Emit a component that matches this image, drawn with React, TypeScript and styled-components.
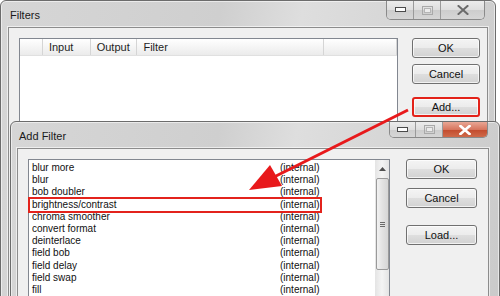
import styled, { createGlobalStyle } from "styled-components";

const GlobalStyle = createGlobalStyle`
  html, body {
    margin: 0;
    padding: 0;
    background: #ffffff;
  }
  body {
    width: 500px;
    height: 296px;
    overflow: hidden;
    font-family: "Liberation Sans", Arial, sans-serif;
  }
`;

const filterNames = [
  "blur more",
  "blur",
  "bob doubler",
  "brightness/contrast",
  "chroma smoother",
  "convert format",
  "deinterlace",
  "field bob",
  "field delay",
  "field swap",
  "fill",
];

const MinIcon = () => (
  <svg width="11" height="6" viewBox="0 0 11 6">
    <rect x="0.5" y="0.5" width="10" height="4" fill="#fdfdfd" stroke="#4a4a4a" />
  </svg>
);

const MaxIcon = () => (
  <svg width="11" height="9" viewBox="0 0 11 9">
    <rect x="0.5" y="0.5" width="10" height="8" fill="none" stroke="#a9a9a9" />
    <rect x="2.5" y="2.5" width="6" height="4" fill="#ececec" stroke="#b5b5b5" />
  </svg>
);

const CloseIcon = ({ active }: { active?: boolean }) => (
  <svg width="12" height="10" viewBox="0 0 12 10">
    <path
      d="M1.5 1 L10.5 9 M10.5 1 L1.5 9"
      stroke={active ? "#ffffff" : "#6a6a6a"}
      strokeWidth={active ? 2.6 : 2}
      strokeLinecap="square"
    />
  </svg>
);

const ArrowOverlay = () => (
  <Overlay width="500" height="296" viewBox="0 0 500 296">
    <line x1="408" y1="110" x2="272" y2="178" stroke="#e8191b" strokeWidth="3" />
    <polygon points="249,190 270,165 282,186" fill="#e8191b" />
  </Overlay>
);

export default function App() {
  return (
    <>
      <GlobalStyle />
      <Desktop>
        <Window $left={0} $top={0} $width={496} $height={330} $padRight={7} $padLeft={7}>
          <TitleBar>
            <Title>Filters</Title>
            <Controls $right={3} $height={18}>
              <CtlButton $w={26}><MinIcon /></CtlButton>
              <CtlButton $w={26}><MaxIcon /></CtlButton>
              <CtlButton $w={43}><CloseIcon /></CtlButton>
            </Controls>
          </TitleBar>
          <Client $pad="10px 7px 10px 10px" $gap={14}>
            <ListView>
              <Header>
                <HeadCell $w={23} />
                <HeadCell $w={48}>Input</HeadCell>
                <HeadCell $w={47}>Output</HeadCell>
                <HeadCell $w={188}>Filter</HeadCell>
                <HeadCell $w={73} />
              </Header>
            </ListView>
            <ButtonColumn $w={68}>
              <Button>OK</Button>
              <Button $gap={6}>Cancel</Button>
              <Button $gap={13} $marked>Add...</Button>
            </ButtonColumn>
          </Client>
        </Window>

        <Window $left={10} $top={121} $width={490} $height={200} $padRight={10} $padLeft={6}>
          <TitleBar>
            <Title>Add Filter</Title>
            <Controls $right={1} $height={15}>
              <CtlButton $w={25}><MinIcon /></CtlButton>
              <CtlButton $w={26}><MaxIcon /></CtlButton>
              <CtlButton $w={44} $red><CloseIcon active /></CtlButton>
            </Controls>
          </TitleBar>
          <Client $pad="10px 11px 10px 10px" $gap={16}>
            <ListBox>
              <Items>
                {filterNames.map((name) => (
                  <Row key={name} $marked={name === "brightness/contrast"}>
                    <Name>{name}</Name>
                    <Kind>(internal)</Kind>
                  </Row>
                ))}
              </Items>
              <ScrollBar>
                <ScrollArrow>
                  <svg width="7" height="4" viewBox="0 0 7 4">
                    <path d="M0 4 L3.5 0 L7 4 Z" fill="#505050" />
                  </svg>
                </ScrollArrow>
                <Thumb>
                  <Grip />
                  <Grip />
                  <Grip />
                </Thumb>
              </ScrollBar>
            </ListBox>
            <ButtonColumn $w={71}>
              <Button>OK</Button>
              <Button $gap={9}>Cancel</Button>
              <Button $gap={17}>Load...</Button>
            </ButtonColumn>
          </Client>
        </Window>

        <ArrowOverlay />
      </Desktop>
    </>
  );
}

const Desktop = styled.div`
  position: relative;
  width: 500px;
  height: 296px;
  overflow: hidden;
`;

const Window = styled.div<{
  $left: number;
  $top: number;
  $width: number;
  $height: number;
  $padRight: number;
  $padLeft: number;
}>`
  position: absolute;
  left: ${(p) => p.$left}px;
  top: ${(p) => p.$top}px;
  width: ${(p) => p.$width}px;
  height: ${(p) => p.$height}px;
  box-sizing: border-box;
  display: flex;
  flex-direction: column;
  padding: 0 ${(p) => p.$padRight}px 7px ${(p) => p.$padLeft}px;
  border: 1px solid #6c6c6c;
  border-radius: 6px 6px 0 0;
  background: linear-gradient(100deg, #d6d6d6 0%, #cfcfcf 40%, #dedede 55%, #cacaca 100%);
  box-shadow: inset 0 0 0 1px rgba(255, 255, 255, 0.55);
`;

const TitleBar = styled.div`
  position: relative;
  height: 26px;
  flex-shrink: 0;
  display: flex;
  align-items: center;
`;

const Title = styled.span`
  font-size: 11px;
  color: #1a1a1a;
  padding-left: 2px;
  padding-top: 1px;
`;

const Controls = styled.div<{ $right: number; $height: number }>`
  position: absolute;
  top: 0;
  right: ${(p) => p.$right}px;
  height: ${(p) => p.$height}px;
  display: flex;
  border: 1px solid #8a8a8a;
  border-top: none;
  border-radius: 0 0 5px 5px;
  overflow: hidden;
`;

const CtlButton = styled.div<{ $w: number; $red?: boolean }>`
  width: ${(p) => p.$w}px;
  height: 100%;
  display: flex;
  align-items: center;
  justify-content: center;
  background: ${(p) =>
    p.$red
      ? "linear-gradient(#e9a795, #d7765e 50%, #c24a2c 51%, #cf6a4a)"
      : "linear-gradient(#ececec, #dedede 50%, #cdcdcd 51%, #d6d6d6)"};
  & + & {
    border-left: 1px solid #9a9a9a;
  }
`;

const Client = styled.div<{ $pad: string; $gap: number }>`
  flex: 1;
  display: flex;
  gap: ${(p) => p.$gap}px;
  padding: ${(p) => p.$pad};
  background: #f0f0f0;
  border: 1px solid #8c8c8c;
  box-shadow: 0 0 0 1px rgba(255, 255, 255, 0.6);
  min-height: 0;
`;

const ListView = styled.div`
  width: 379px;
  flex-shrink: 0;
  background: #ffffff;
  border: 1px solid #828790;
  box-sizing: border-box;
`;

const Header = styled.div`
  display: flex;
  height: 16px;
  background: linear-gradient(#ffffff, #f3f3f3 60%, #ebebeb);
  border-bottom: 1px solid #e0e0e0;
`;

const HeadCell = styled.div<{ $w: number }>`
  width: ${(p) => p.$w}px;
  box-sizing: border-box;
  padding-left: 6px;
  font-size: 11px;
  line-height: 16px;
  color: #1e1e1e;
  border-right: 1px solid #d5d5d5;
`;

const ButtonColumn = styled.div<{ $w: number }>`
  width: ${(p) => p.$w}px;
  flex-shrink: 0;
  display: flex;
  flex-direction: column;
`;

const Button = styled.div<{ $gap?: number; $marked?: boolean }>`
  height: 20px;
  box-sizing: border-box;
  margin-top: ${(p) => p.$gap ?? 0}px;
  display: flex;
  align-items: center;
  justify-content: center;
  font-size: 11px;
  color: #111;
  border: ${(p) => (p.$marked ? "2px solid #e32219" : "1px solid #707070")};
  border-radius: 3px;
  background: linear-gradient(#f4f4f4, #ececec 48%, #dedede 52%, #d2d2d2);
  box-shadow: inset 0 0 0 1px rgba(255, 255, 255, 0.7);
`;

const ListBox = styled.div`
  width: 362px;
  flex-shrink: 0;
  display: flex;
  background: #ffffff;
  border: 1px solid #828790;
  box-sizing: border-box;
`;

const Items = styled.div`
  flex: 1;
  padding: 2px 0 0 1px;
`;

const Row = styled.div<{ $marked?: boolean }>`
  display: flex;
  width: 290px;
  height: 12.2px;
  font-size: 10px;
  line-height: 12px;
  color: #111;
  outline: ${(p) => (p.$marked ? "2px solid #e3231c" : "none")};
  outline-offset: 0px;
`;

const Name = styled.span`
  width: 248px;
  padding-left: 2px;
  white-space: nowrap;
`;

const Kind = styled.span`
  white-space: nowrap;
`;

const ScrollBar = styled.div`
  width: 14px;
  display: flex;
  flex-direction: column;
  align-items: center;
  background: linear-gradient(90deg, #e4e4e4, #f4f4f4 50%, #e4e4e4);
`;

const ScrollArrow = styled.div`
  height: 17px;
  width: 100%;
  display: flex;
  align-items: center;
  justify-content: center;
`;

const Thumb = styled.div`
  margin-top: 1px;
  width: 13px;
  height: 92px;
  box-sizing: border-box;
  border: 1px solid #9a9a9a;
  border-radius: 2px;
  background: linear-gradient(90deg, #f2f2f2, #e2e2e2 50%, #d6d6d6);
  display: flex;
  flex-direction: column;
  align-items: center;
  justify-content: center;
  gap: 1px;
`;

const Grip = styled.div`
  width: 5px;
  height: 1px;
  background: #6a6a6a;
`;

const Overlay = styled.svg`
  position: absolute;
  left: 0;
  top: 0;
  pointer-events: none;
`;
